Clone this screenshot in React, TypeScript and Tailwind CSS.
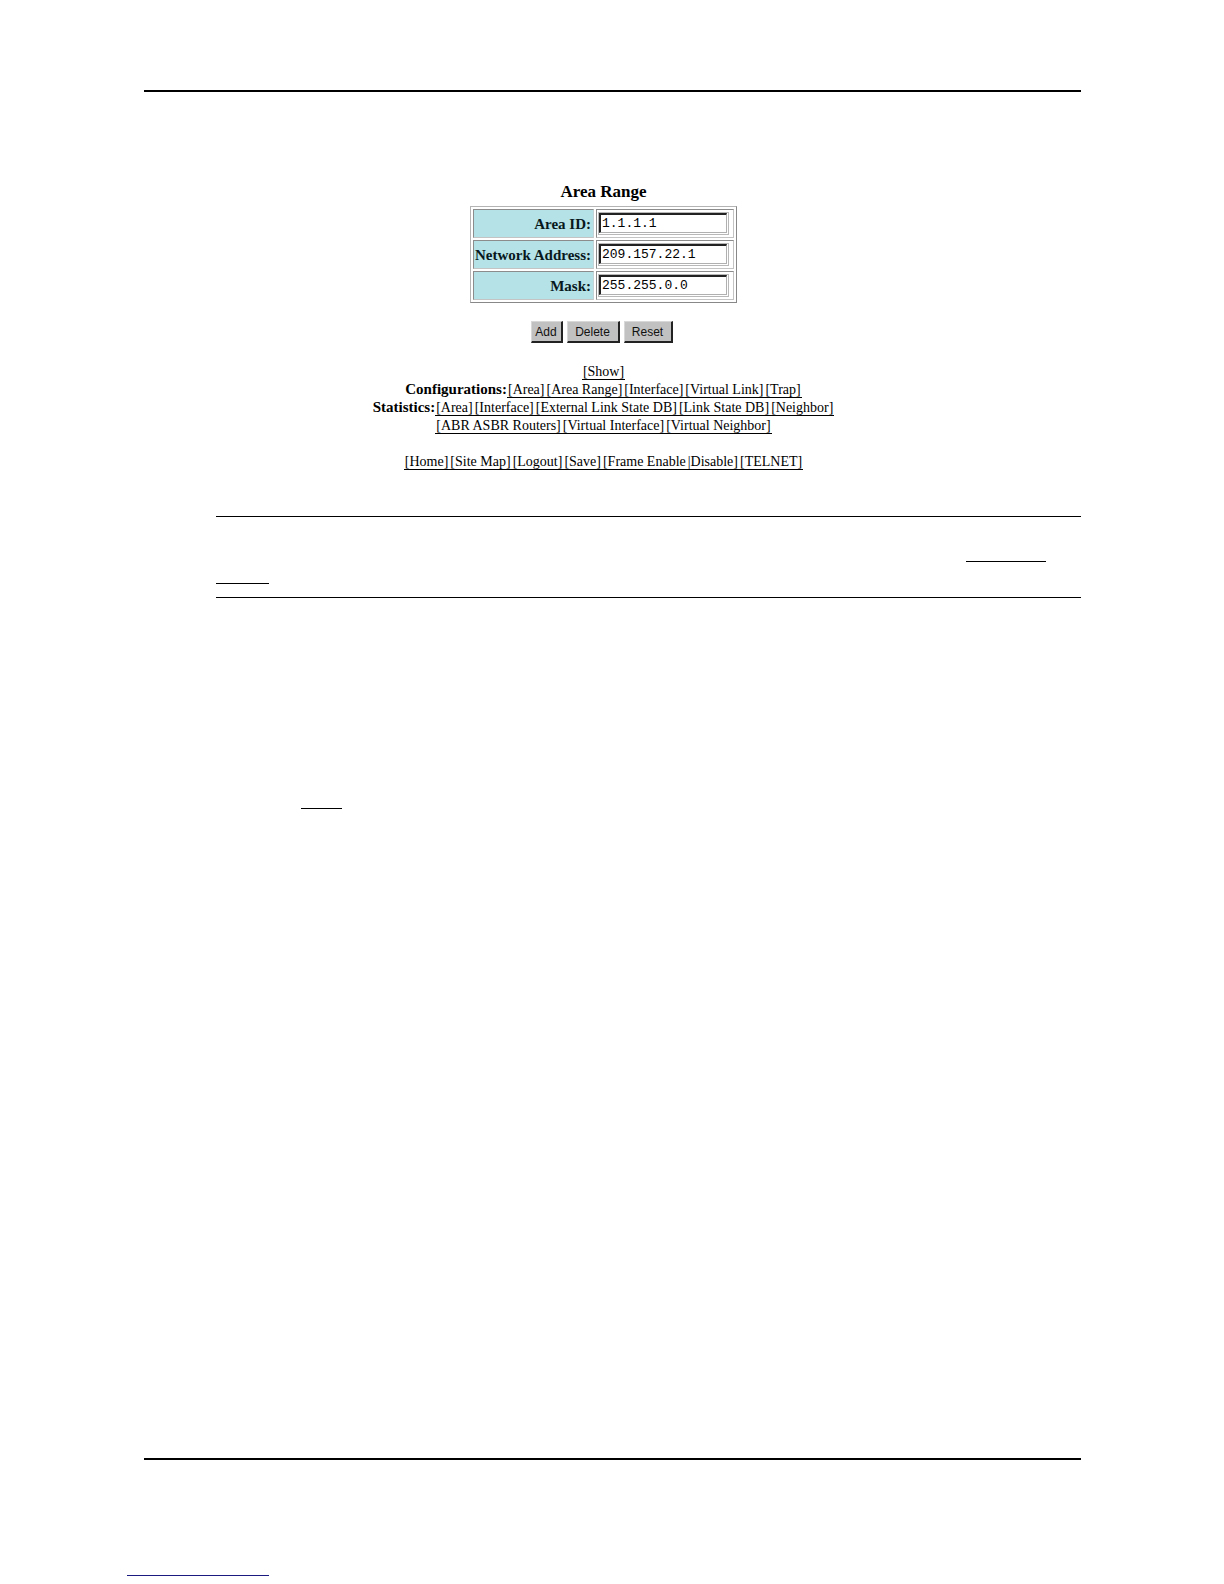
const fields = [
  { id: "area-id", label: "Area ID:", value: "1.1.1.1" },
  { id: "network-address", label: "Network Address:", value: "209.157.22.1" },
  { id: "mask", label: "Mask:", value: "255.255.0.0" },
];

const buttons = [
  { label: "Add", width: "w-8" },
  { label: "Delete", width: "w-[53px]" },
  { label: "Reset", width: "w-[49px]" },
];

function Field({ id, label, value }: { id: string; label: string; value: string }) {
  return (
    <tr className="h-[29px]">
      <th
        scope="row"
        className="border border-t-[#8c8c8c] border-l-[#8c8c8c] border-r-[#c4d4d6] border-b-[#c4c4c4] bg-[#b4e2e7] pr-[2px] pl-px text-right text-[15px] leading-5 font-bold whitespace-nowrap text-[#08181c]"
      >
        <label htmlFor={id}>{label}</label>
      </th>
      <td className="border border-t-[#8c8c8c] border-l-[#8c8c8c] border-r-[#c4c4c4] border-b-[#c4c4c4] pr-1 pl-px">
        <div className="border border-[#b8b8b8] pr-px pb-px">
          <input
            id={id}
            type="text"
            defaultValue={value}
            className="block h-[20px] w-[128px] rounded-none border border-t-2 border-l-2 border-t-[#222222] border-l-[#222222] border-r-[#b0b0b0] border-b-[#b0b0b0] bg-white px-px font-['Liberation_Mono',monospace] text-[13px] text-black outline-none"
          />
        </div>
      </td>
    </tr>
  );
}

function LinkRow({ title, links }: { title?: string; links: string[] }) {
  return (
    <p className="flex h-[18px] items-baseline justify-center whitespace-nowrap">
      {title && <b className="text-[15px] leading-3">{title}</b>}
      {links.map((text) => (
        <a key={text} href="#" className="border-b border-black px-px text-[14px] leading-[14px]">
          {text}
        </a>
      ))}
    </p>
  );
}

export default function App() {
  return (
    <div className="bg-white pt-[90px] font-['Liberation_Serif',serif] text-black">
      <main className="mr-[143px] ml-36">
        <hr className="border-t-2 border-black" />
        <section className="flex flex-col items-center pt-[88px] pr-[18px]">
          <h1 className="text-[17px] leading-6 font-bold">Area Range</h1>
          <table className="mt-[2px] border-separate border-spacing-[2px] border border-t-[#b4b4b4] border-l-[#b4b4b4] border-r-[#888888] border-b-[#888888]">
            <tbody>
              {fields.map((field) => (
                <Field key={field.id} {...field} />
              ))}
            </tbody>
          </table>
          <div className="mt-[18px] mr-1 flex gap-1">
            {buttons.map(({ label, width }) => (
              <button
                key={label}
                type="button"
                className={`${width} h-[22px] border border-t-[#d8d8d8] border-l-[#d8d8d8] border-r-2 border-b-2 border-r-[#222222] border-b-[#222222] bg-[#c1c1c1] text-center font-['Liberation_Sans',sans-serif] text-[12px] leading-4 text-[#111111]`}
              >
                {label}
              </button>
            ))}
          </div>
          <nav className="mt-[22px]">
            <LinkRow links={["[Show]"]} />
            <LinkRow
              title="Configurations:"
              links={["[Area]", "[Area Range]", "[Interface]", "[Virtual Link]", "[Trap]"]}
            />
            <LinkRow
              title="Statistics:"
              links={["[Area]", "[Interface]", "[External Link State DB]", "[Link State DB]", "[Neighbor]"]}
            />
            <LinkRow links={["[ABR ASBR Routers]", "[Virtual Interface]", "[Virtual Neighbor]"]} />
            <div className="mt-[18px]">
              <LinkRow
                links={["[Home]", "[Site Map]", "[Logout]", "[Save]", "[Frame Enable", "|Disable]", "[TELNET]"]}
              />
            </div>
          </nav>
        </section>
        <section className="mt-[43px] ml-[72px]">
          <div className="h-[82px] border-y border-black pt-[22px]">
            <div className="mr-[35px] ml-auto h-[23px] w-20 border-b border-black" />
            <div className="h-[22px] w-[53px] border-b border-black" />
          </div>
          <div className="ml-[85px] h-[211px] w-[41px] border-b border-black" />
        </section>
        <hr className="mt-[649px] border-t-2 border-black" />
      </main>
      <footer className="pb-2 pl-[127px]">
        <div className="h-[116px] w-[142px] border-b border-[#1a1a80]" />
      </footer>
    </div>
  );
}
